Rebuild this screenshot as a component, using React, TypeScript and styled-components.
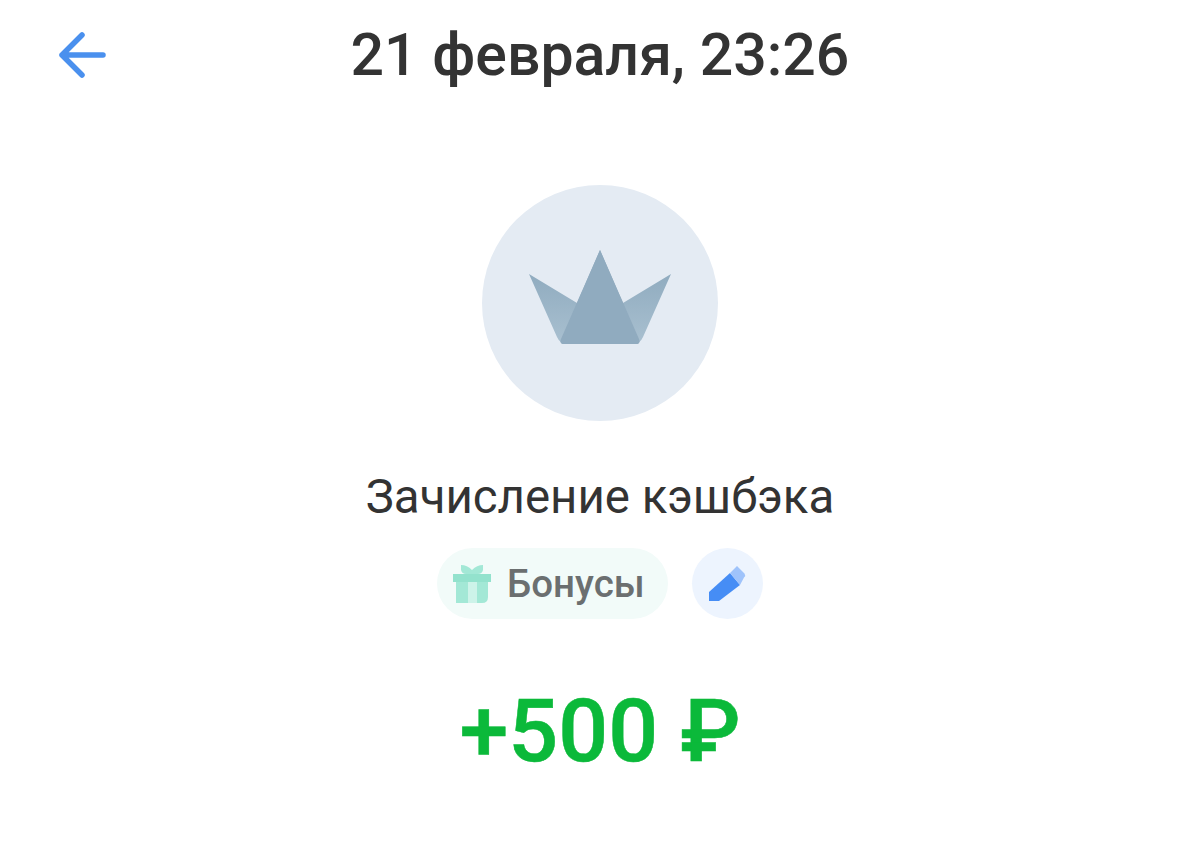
import styled, { createGlobalStyle } from 'styled-components';

const GlobalStyle = createGlobalStyle`
  html, body {
    margin: 0;
    padding: 0;
    background: #ffffff;
  }
`;

const Page = styled.main`
  width: 1200px;
  height: 843px;
  overflow: hidden;
  display: flex;
  flex-direction: column;
  align-items: center;
  font-family: Roboto, 'Liberation Sans', sans-serif;
`;

const Header = styled.header`
  width: 100%;
  height: 110px;
  position: relative;
  display: flex;
  justify-content: center;
  align-items: center;
`;

const BackButton = styled.button`
  position: absolute;
  left: 58px;
  top: 31px;
  width: 48px;
  height: 48px;
  padding: 0;
  border: none;
  background: none;
`;

const DateTitle = styled.h1`
  margin: 0;
  font-size: 59px;
  font-weight: 500;
  line-height: 110px;
  color: #333333;
`;

const Avatar = styled.div`
  width: 236px;
  height: 236px;
  margin-top: 75px;
  padding-bottom: 12px;
  box-sizing: border-box;
  border-radius: 50%;
  background: #e4ebf3;
  display: flex;
  align-items: center;
  justify-content: center;
`;

const Description = styled.div`
  margin-top: 46px;
  font-size: 47.4px;
  line-height: 60px;
  color: #333333;
`;

const Tags = styled.div`
  margin-top: 21px;
  display: flex;
  gap: 24px;
`;

const CategoryChip = styled.div`
  height: 71px;
  width: 231px;
  box-sizing: border-box;
  padding-left: 16px;
  border-radius: 36px;
  background: #f2fbf9;
  display: flex;
  align-items: center;
  gap: 16px;
`;

const CategoryName = styled.span`
  font-size: 38.5px;
  font-weight: 500;
  color: #6b6f70;
`;

const EditButton = styled.button`
  width: 71px;
  height: 71px;
  padding: 0;
  border: none;
  border-radius: 50%;
  background: #edf4fe;
  display: flex;
  align-items: center;
  justify-content: center;
`;

const Amount = styled.div`
  margin-top: 60px;
  font-size: 88px;
  font-weight: 500;
  line-height: 104px;
  color: #0bb93a;
  -webkit-text-stroke: 0.5px #0bb93a;
`;

export default function App() {
  return (
    <Page>
      <GlobalStyle />
      <Header>
        <BackButton aria-label="Назад">
          <svg width="48" height="48" viewBox="0 0 48 48" fill="none">
            <path
              d="M24 4 4 24l20 20M4 24h41"
              stroke="#4a90ee"
              strokeWidth="5.5"
              strokeLinecap="round"
              strokeLinejoin="round"
            />
          </svg>
        </BackButton>
        <DateTitle>21 февраля, 23:26</DateTitle>
      </Header>
      <Avatar>
        <svg width="142" height="94" viewBox="0 0 142 94">
          <defs>
            <linearGradient id="crownSide" x1="0" y1="0" x2="0" y2="1">
              <stop offset="0.2" stopColor="#8eaabe" />
              <stop offset="1" stopColor="#a9c0d0" />
            </linearGradient>
          </defs>
          <path
            d="M0 24 28 87Q31 94 38 94H104Q111 94 114 87L142 24 94 53 71 0 48 53Z"
            fill="url(#crownSide)"
          />
          <path
            d="M71 0 110 89Q112 94 107 94H35Q30 94 32 89Z"
            fill="#90abbf"
          />
        </svg>
      </Avatar>
      <Description>Зачисление кэшбэка</Description>
      <Tags>
        <CategoryChip>
          <svg width="38" height="38" viewBox="0 0 38 38">
            <path d="M3 17H35V32Q35 38 29 38H3Z" fill="#a3e8d6" />
            <path d="M0 9H38V17H0Z" fill="#93e2cd" />
            <path d="M15 17H24V38H15Z" fill="#cdf3e9" />
            <path d="M8 0Q14 0 19 5 24 0 30 0V5Q29 9 25 9H13Q9 9 8 5Z" fill="#a3e8d6" />
          </svg>
          <CategoryName>Бонусы</CategoryName>
        </CategoryChip>
        <EditButton aria-label="Изменить">
          <svg width="37" height="35" viewBox="0 0 37 35">
            <path d="M0 26 21 7 31 19 10 35H0Z" fill="#468df5" />
            <path d="M21 7 28 0 35.5 7.5Q37 9.5 35 11.5L31 19Z" fill="#9fc3fb" />
          </svg>
        </EditButton>
      </Tags>
      <Amount>+500 ₽</Amount>
    </Page>
  );
}
